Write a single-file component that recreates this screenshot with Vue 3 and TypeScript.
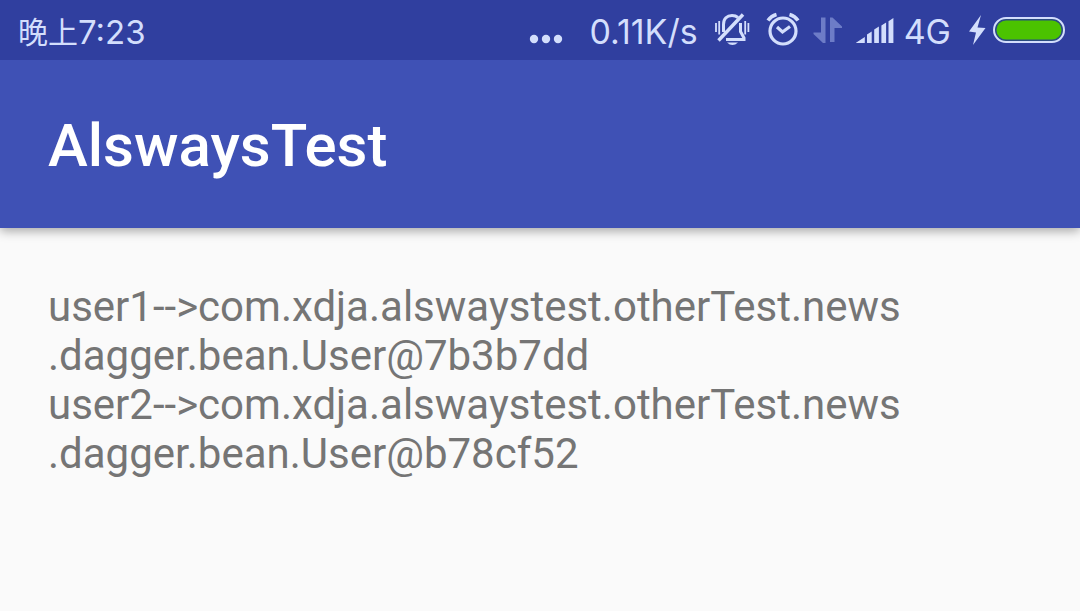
<script setup lang="ts">
const clock = { period: '晚上', time: '7:23' }
const speed = '0.11K/s'
const network = '4G'
const title = 'AlswaysTest'
const lines: string[] = [
  'user1-->com.xdja.alswaystest.otherTest.news',
  '.dagger.bean.User@7b3b7dd',
  'user2-->com.xdja.alswaystest.otherTest.news',
  '.dagger.bean.User@b78cf52',
]
</script>

<template>
  <div class="screen">
    <div class="status-bar">
      <div class="clock"><span class="period">{{ clock.period }}</span><span>{{ clock.time }}</span></div>
      <div class="indicators">
        <svg class="dots" width="34" height="60" viewBox="0 0 34 60" aria-hidden="true">
          <circle cx="5" cy="39" r="4.2" /><circle cx="17" cy="39" r="4.2" /><circle cx="29" cy="39" r="4.2" />
        </svg>
        <span class="speed">{{ speed }}</span>
        <svg class="bell" width="36" height="60" viewBox="715 0 36 60" role="img" aria-label="Silent">
          <g fill="none" stroke="currentColor">
            <path d="M724.500 32V24.500C724.500 18.500 728 15.500 733 15.500C735.500 15.500 737.500 16.200 739 17.500M741.500 23V31.500L745 38V39.500H727" stroke-width="3" />
            <path d="M719.500 40.500L744 14.500" stroke-width="3.400" />
            <path d="M717 23V32M720.200 21V34.500M746.200 21V34.500M749.400 23V32" stroke-width="1.800" />
          </g>
          <path d="M728 42.500H739Q733.500 47.500 728 42.500Z" fill="currentColor" />
        </svg>
        <svg class="alarm" width="34" height="60" viewBox="766 0 34 60" role="img" aria-label="Alarm">
          <g fill="none" stroke="currentColor" stroke-width="3.200">
            <circle cx="783" cy="31" r="13" />
            <path d="M768 20.500Q771 16 776.500 14.500M798 20.500Q795 16 789.500 14.500" stroke-width="3.600" />
            <path d="M777 27L782.500 32L790 26.500" />
          </g>
        </svg>
        <svg class="data" width="30" height="60" viewBox="813 0 30 60" role="img" aria-label="Mobile data">
          <path d="M821 17.500H825.500V43H823L813.500 34V32.500H821Z" />
          <path d="M830 17.500H832.500L842 26.500V28H834.500V42H830Z" />
        </svg>
        <svg class="signal" width="38" height="60" viewBox="856 0 38 60" role="img" aria-label="Signal strength">
          <path d="M856 42.800L864.800 37V43H856ZM867 34.500L871.700 31.500V43H867ZM874.200 29.500L878.900 26.500V43H874.200ZM881.400 25.500L886.100 22.500V43H881.400ZM888.500 21.200L893.400 18V43H888.500Z" />
        </svg>
        <span class="network">{{ network }}</span>
        <svg width="18" height="60" viewBox="968 0 18 60" role="img" aria-label="Charging">
          <path d="M981 15L969 31.500L976 32.500L973 45L985.500 28L977.500 27.500Z" />
        </svg>
        <svg class="battery" width="72" height="60" viewBox="993 0 72 60" role="img" aria-label="Battery full">
          <rect x="994" y="18" width="70" height="24" rx="12" fill="#2a4c80" stroke="currentColor" stroke-width="2" />
          <rect x="996.500" y="20.500" width="65" height="19" rx="9.500" fill="#4bc300" />
        </svg>
      </div>
    </div>
    <header class="app-bar"><h1>{{ title }}</h1></header>
    <main>
      <p><span v-for="line in lines" :key="line" class="line">{{ line }}</span></p>
    </main>
  </div>
</template>

<style>
body { margin: 0; background: #fafafa; }
</style>

<style scoped>
.screen {
  min-height: 100vh;
  background: #fafafa;
  font-family: Roboto, "Noto Sans CJK SC", sans-serif;
}
.status-bar {
  position: relative;
  z-index: 1;
  display: flex;
  align-items: center;
  justify-content: space-between;
  height: 60px;
  padding: 0 15px 0 18px;
  background: #303f9f;
  color: #d3defc;
  font-family: Inter, "Noto Sans CJK SC", sans-serif;
  font-size: 33px;
  line-height: 60px;
  white-space: nowrap;
}
.period { font-size: 30px; }
.clock, .indicators { display: flex; align-items: center; height: 60px; }
.clock, .speed, .network { padding-top: 3px; }
.indicators { gap: 10px; font-size: 34px; }
.dots { margin-right: 17px; }
.speed, .bell { margin-right: 6px; }
.network { margin-right: 7px; }
.alarm, .data { margin-right: 3px; }
svg { display: block; flex: none; fill: currentColor; }
.data { color: #6d7cc7; }
.battery { margin-left: -3px; }
.app-bar {
  display: flex;
  align-items: center;
  height: 168px;
  padding: 0 48px;
  background: #3f51b5;
  box-shadow: 0 3px 10px rgba(0, 0, 0, 0.34);
}
h1 {
  margin: 0;
  padding-top: 4px;
  color: #fff;
  font-size: 60px;
  font-weight: 500;
  line-height: 70px;
}
main { padding: 54px 48px; }
p {
  margin: 0;
  color: #757575;
  font-size: 42px;
  line-height: 49px;
}
.line { display: block; }
</style>
